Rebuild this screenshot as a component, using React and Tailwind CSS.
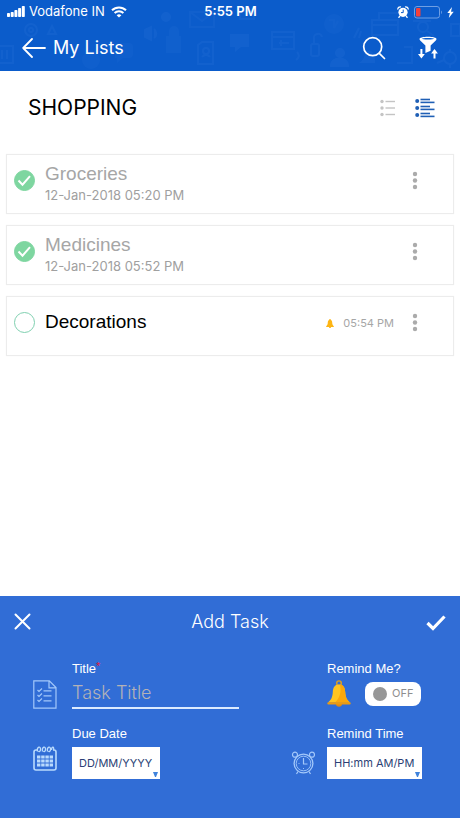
import React, { useState } from 'react';

const initialTasks = [
  { id: 1, name: 'Groceries', date: '12-Jan-2018 05:20 PM', done: true },
  { id: 2, name: 'Medicines', date: '12-Jan-2018 05:52 PM', done: true },
  { id: 3, name: 'Decorations', reminder: '05:54 PM', done: false },
];

function SignalIcon() {
  return (
    <svg width="18" height="12" viewBox="0 0 18 12" fill="white" aria-hidden="true">
      <rect x="0" y="7" width="3" height="4" rx="0.8" />
      <rect x="3.7" y="6" width="3" height="5" rx="0.8" />
      <rect x="7.4" y="4" width="3" height="7" rx="0.8" />
      <rect x="11.1" y="2" width="3" height="9" rx="0.8" />
      <rect x="14.8" y="0" width="3" height="11" rx="0.8" />
    </svg>
  );
}

function WifiIcon() {
  return (
    <svg width="16" height="12" viewBox="0 0 16 12" fill="none" stroke="white" strokeWidth="2" aria-hidden="true">
      <path d="M1 4.3a10 10 0 0 1 14 0" />
      <path d="M3.6 7a6.3 6.3 0 0 1 8.8 0" />
      <path d="M5.6 9.2a3.6 3.6 0 0 1 4.8 0L8 11.6z" fill="white" stroke="none" />
    </svg>
  );
}

function StatusAlarmIcon() {
  return (
    <svg width="12" height="12" viewBox="0 0 12 12" aria-hidden="true">
      <circle cx="6" cy="6.3" r="4.6" fill="white" />
      <path d="M.8 3A2.4 2.4 0 0 1 3.5.9M11.2 3A2.4 2.4 0 0 0 8.5.9M2.7 10.2L1.9 11.4M9.3 10.2l.8 1.2" stroke="white" strokeWidth="1.3" fill="none" strokeLinecap="round" />
      <path d="M6.2 3.6v3H4" stroke="#0b5ccb" strokeWidth="1" fill="none" />
    </svg>
  );
}

function BatteryIcon() {
  return (
    <svg width="28" height="13" viewBox="0 0 28 13" aria-hidden="true">
      <rect x="0.5" y="0.5" width="25" height="11.5" rx="2.5" fill="none" stroke="#6f9fe4" />
      <rect x="2" y="2" width="4.5" height="8.5" rx="1" fill="#f5403b" />
      <path d="M27 4.5c1.2.6 1.2 3 0 3.5z" fill="#6f9fe4" />
    </svg>
  );
}

function BoltIcon() {
  return (
    <svg width="7" height="11" viewBox="0 0 7 11" fill="white" aria-hidden="true">
      <path d="M5 0L.3 6h2.5L1.8 11 6.7 4.7H4z" />
    </svg>
  );
}

function BackIcon() {
  return (
    <svg width="24" height="20" viewBox="0 0 24 20" fill="none" stroke="white" strokeWidth="1.8" strokeLinecap="round" strokeLinejoin="round" aria-hidden="true">
      <path d="M10 1L1.2 10l8.8 9M1.2 10H23" />
    </svg>
  );
}

function SearchIcon() {
  return (
    <svg width="24" height="24" viewBox="0 0 24 24" fill="none" stroke="white" strokeWidth="1.7" strokeLinecap="round" aria-hidden="true">
      <circle cx="10.7" cy="10.7" r="9" />
      <path d="M17.3 17.3L22.5 22.5" />
    </svg>
  );
}

function FilterSortIcon() {
  return (
    <svg width="20" height="24" viewBox="0 0 20 24" aria-hidden="true">
      <path fill="white" fillRule="evenodd" d="M10 .8c5 0 8.5.9 8.5 2.3 0 .5-.3 1-.7 1.4L12.6 9.5v5.3L7.4 17V9.5L2.2 4.500c-.4-.4-.7-.9-.7-1.400C1.5 1.700 5 .8 10 .8zM10 2C6.5 2 4 2.400 4 2.800s2.500.8 6 .8 6-.4 6-.8-2.500-.8-6-.8z" />
      <path fill="white" d="M2.400 13h2v5h2.400l-3.400 4.500L0 18h2.400zM15.500 22.500h2v-5h2.400L16.500 13l-3.400 4.500h2.400z" />
    </svg>
  );
}

// faint doodles behind the header
function HeaderPattern() {
  return (
    <svg className="absolute inset-0 h-full w-full" viewBox="0 0 460 71" preserveAspectRatio="xMidYMid slice" fill="none" stroke="#4a8ae6" strokeWidth="2" opacity="0.12" aria-hidden="true">
      <path d="M-4 46h17v17H-4M2 50v9M7 50v9" />
      <circle cx="31" cy="30" r="6" />
      <circle cx="31" cy="30" r="2" />
      <path d="M52 26l4 8h-8zM46 8l8 6M80 12h7v7h-7z" />
      <circle cx="91" cy="60" r="9" fill="#4a8ae6" stroke="none" opacity="0.6" />
      <path d="M115 43h14a4 4 0 0 1 4 4v7a4 4 0 0 1-4 4h-6l-6 5v-5h-2z" fill="#4a8ae6" stroke="none" opacity="0.6" />
      <path d="M145 30l6-3v13l-6-3zM154 29c3 2 3 7 0 9" fill="#4a8ae6" />
      <circle cx="166" cy="17" r="4" fill="#4a8ae6" />
      <path d="M167 37h13v15h-13zM170 37v-6a4 4 0 0 1 8 0v6" fill="#4a8ae6" opacity="0.7" />
      <path d="M190 12h24v15h-24zM190 12l12 9 12-9" opacity="0.8" />
      <path d="M198 45l4-3h11v22h-15zM202 57a5 5 0 0 1 8 0" />
      <circle cx="206" cy="51" r="3" />
      <path d="M230 34h19v13h-8l-6 5v-5h-5z" fill="#4a8ae6" stroke="none" />
      <path d="M272 32h22v17h-22zM272 37h22M279 43h10M281 40v6" />
      <path d="M240 11h14v8h-14zM297 52c3 3 2 6-1 8" />
      <circle cx="334" cy="24" r="10" fill="#4a8ae6" stroke="none" opacity="0.6" />
      <path d="M329 20h5v8M338 21l-4 7" />
      <rect x="311" y="44" width="8" height="12" rx="2" />
      <path d="M314 44v-5a4 4 0 0 1 8-2M354 38l5-10M361 31l-2 7" />
      <circle cx="340" cy="53" r="4" fill="#4a8ae6" />
      <path d="M331 66c0-10 17-10 17 0zM362 62c4-3 3-8 6-10s6 2 6 10z" fill="#4a8ae6" />
      <path d="M372 20h26v15h-26zM372 25h26M398 13h-19v7M404 47h8v16h-15" />
      <circle cx="423" cy="27" r="5" />
      <path d="M427 31l7 5M413 21h18M451 24h9v12h-9z" />
      <circle cx="450" cy="58" r="6" />
      <path d="M437 63l7-3M450 49v3M450 64v4" />
    </svg>
  );
}

function CompactListIcon() {
  return (
    <svg width="16" height="18" viewBox="0 0 16 18" fill="#c4c4c4" aria-hidden="true">
      {[2.5, 9, 15.5].map((y) => (
        <g key={y}>
          <circle cx="2" cy={y} r="1.7" />
          <rect x="5.5" y={y - 0.7} width="9.5" height="1.4" />
        </g>
      ))}
    </svg>
  );
}

function DetailListIcon() {
  return (
    <svg width="20" height="20" viewBox="0 0 20 20" fill="#1f5fb5" aria-hidden="true">
      {[3, 10, 17].map((y) => (
        <g key={y}>
          <circle cx="2.2" cy={y} r="2" />
          <rect x="5.5" y={y - 2.3} width="9.5" height="1.6" />
          <rect x="5.5" y={y + 0.6} width="14" height="1.6" />
        </g>
      ))}
    </svg>
  );
}

function SmallBellIcon() {
  return (
    <svg width="8" height="9" viewBox="0 0 8 9" fill="#fdb515" aria-hidden="true">
      <path d="M4 0c.6 0 .9.4.9.9C6.2 1.5 6.2 3 6.3 4.5c.1 1 .5 1.7 1.5 2.700v.8H.2v-.8c1-1 1.400-1.700 1.500-2.700C1.800 3 1.800 1.500 3.100.9c0-.5.3-.9.9-.9z" />
      <path d="M3 8h2c0 .7-.4 1-1 1s-1-.3-1-1z" />
    </svg>
  );
}

function BellIcon() {
  return (
    <svg width="24" height="27" viewBox="0 0 24 27" aria-hidden="true">
      <circle cx="12" cy="3.2" r="2.3" fill="none" stroke="#e2a01c" strokeWidth="1.4" />
      <path d="M9 24h6c0 1.700-1.200 2.800-3 2.800S9 25.700 9 24z" fill="#e08a10" />
      <path d="M12 4.500c-4.500 0-6 3.500-6.200 7.500C5.500 17.500 4 20 1 22.500h22c-3-2.500-4.500-5-4.800-10.500-.2-4-1.700-7.500-6.200-7.500z" fill="#ffc421" />
      <path d="M13 4.600c3.700.4 5 3.700 5.200 7.400.3 5.500 1.800 8 4.800 10.500H8C13 18 14.500 12 13 4.600z" fill="#fba70c" />
      <rect x="0.3" y="22.2" width="23.4" height="2.3" rx="1.1" fill="#eb9a12" />
    </svg>
  );
}

function TaskSheetIcon() {
  return (
    <svg width="24" height="29" viewBox="0 0 24 29" fill="none" stroke="#a3c8fa" strokeWidth="1.2" aria-hidden="true">
      <path d="M.8.8h15.500L23 7.500v20.700H.8zM16 .8v7h7" />
      <path d="M4.500 10l1.500 1.500L9 8.500M4.500 15l1.500 1.500L9 13.500M4.500 20l1.500 1.500L9 18.500" />
      <path d="M10.500 10.800h8M10.500 15.800h8M10.500 20.800h8" />
    </svg>
  );
}

function CalendarIcon() {
  return (
    <svg width="24" height="25" viewBox="0 0 24 25" fill="none" stroke="#b9dafd" strokeWidth="1.6" aria-hidden="true">
      <path d="M4 4H3a2 2 0 0 0-2 2v16a2 2 0 0 0 2 2h18a2 2 0 0 0 2-2V6a2 2 0 0 0-2-2h-1" />
      {[4.5, 9.5, 14.5].map((x) => (
        <path key={x} d={`M${x} 5.500c-1-5 3.500-6 3-1.500-.2 1.500-1.500 2-2 1`} strokeWidth="1.3" />
      ))}
      <path d="M18.500 4c0-4 3-3.500 2 0" strokeWidth="1.3" />
      <g fill="#b9dafd" stroke="none">
        {[9.5, 13.5, 17.5].map((y) =>
          [4, 8.2, 12.4, 16.6].map((x) => <rect key={`${x}-${y}`} x={x} y={y} width="3.4" height="3" />)
        )}
      </g>
    </svg>
  );
}

function AlarmIcon() {
  return (
    <svg width="24" height="24" viewBox="0 0 24 24" fill="none" stroke="#a3c8fa" aria-hidden="true">
      <circle cx="12.5" cy="12.5" r="9.4" strokeWidth="1.3" />
      <circle cx="12.5" cy="12.5" r="7.3" strokeWidth="0.9" />
      <circle cx="4" cy="3.7" r="2.5" strokeWidth="1.2" />
      <circle cx="21" cy="3.7" r="2.5" strokeWidth="1.2" />
      <path d="M12.5 7v6h4M7 20.500L5.500 23M18 20.500L19.500 23" strokeWidth="1.2" />
      <path d="M7.500 12.500h1M12.500 17v1" strokeWidth="0.9" />
    </svg>
  );
}

function TaskRow({ task, onToggle }) {
  return (
    <li className="flex h-[60px] items-start border border-[#ececec] pl-[7px] pr-8 shadow-[0_0_1px_#f0f0f0]">
      <label className="relative mt-[15px] flex shrink-0 cursor-pointer">
        <input
          type="checkbox"
          aria-label={task.name}
          checked={task.done}
          onChange={() => onToggle(task.id)}
          className="h-[21px] w-[21px] appearance-none rounded-full border border-[#7fd0b0] checked:border-[#7ed6a0] checked:bg-[#7ed6a0]"
        />
        {task.done && (
          <svg className="pointer-events-none absolute inset-0" width="21" height="21" viewBox="0 0 21 21" fill="none" stroke="white" strokeWidth="2" aria-hidden="true">
            <path d="M4.500 10.500l4 4.200 7.500-8.500" />
          </svg>
        )}
      </label>
      <div className={`ml-[10px] flex-1 ${task.done ? 'pt-[8px]' : 'pt-[14px]'}`}>
        <div className={`text-[19px] leading-[22px] ${task.done ? 'text-[#a6a6a6]' : 'text-black'}`}>{task.name}</div>
        {task.date && (
          <div className="font-['Inter',sans-serif] text-[13px] leading-[20px] text-[#a0a0a0]">{task.date}</div>
        )}
      </div>
      {task.reminder && (
        <div className="mt-[17px] flex items-center gap-[9px] pr-[15px] font-['Inter',sans-serif] text-[11px] leading-[18px] text-[#a6a6a6]">
          <SmallBellIcon />
          <span>{task.reminder}</span>
        </div>
      )}
      <button aria-label={`Options for ${task.name}`} className="mt-[16px] flex w-[12px] justify-center">
        <svg width="6" height="19" viewBox="0 0 6 19" fill="#ababab" aria-hidden="true">
          <circle cx="3" cy="3" r="2.2" />
          <circle cx="3" cy="9.5" r="2.2" />
          <circle cx="3" cy="16" r="2.2" />
        </svg>
      </button>
    </li>
  );
}

function PickerField({ id, value }) {
  return (
    <div className="relative w-max">
      <select id={id} className="block h-8 appearance-none bg-white px-[7px] font-['Inter',sans-serif] text-[11px] text-[#2b3f75]">
        <option>{value}</option>
      </select>
      <svg className="pointer-events-none absolute bottom-[2px] right-[2px]" width="5" height="5" viewBox="0 0 5 5" fill="#3f83dc" aria-hidden="true">
        <path d="M0 0h5L3 5H2z" />
      </svg>
    </div>
  );
}

export default function App() {
  const [tasks, setTasks] = useState(initialTasks);
  const [title, setTitle] = useState('');
  const [remind, setRemind] = useState(false);

  const toggleTask = (id) => {
    setTasks((list) => list.map((t) => (t.id === id ? { ...t, done: !t.done } : t)));
  };

  return (
    <div className="flex min-h-screen flex-col bg-white font-['Liberation_Sans',sans-serif]">
      <header className="relative bg-[#0b5ccb] font-['Inter',sans-serif] text-white">
        <HeaderPattern />
        <div className="relative grid h-6 grid-cols-[1fr_auto_1fr] items-center pl-[7px] pr-[6px] text-[13px]">
          <div className="flex items-center gap-1">
            <SignalIcon />
            <span>Vodafone IN</span>
            <span className="ml-[2px]"><WifiIcon /></span>
          </div>
          <div className="font-semibold">5:55 PM</div>
          <div className="flex items-center justify-end gap-[5px]">
            <StatusAlarmIcon />
            <BatteryIcon />
            <BoltIcon />
          </div>
        </div>
        <div className="relative flex h-[47px] items-center pl-[22px] pr-[22px]">
          <button aria-label="Back"><BackIcon /></button>
          <h1 className="ml-[7px] flex-1 text-[18px]">My Lists</h1>
          <button aria-label="Search"><SearchIcon /></button>
          <button aria-label="Filter and sort" className="ml-8"><FilterSortIcon /></button>
        </div>
      </header>

      <main className="flex-1 px-[6px]">
        <div className="flex h-[83px] items-center pb-[10px] pl-[22px] pr-[19px]">
          <h2 className="flex-1 font-['Inter',sans-serif] text-[21px] text-black">SHOPPING</h2>
          <button aria-label="Compact view"><CompactListIcon /></button>
          <button aria-label="Detailed view" className="ml-[19px]"><DetailListIcon /></button>
        </div>
        <ul className="flex flex-col gap-[11px]">
          {tasks.map((task) => (
            <TaskRow key={task.id} task={task} onToggle={toggleTask} />
          ))}
        </ul>
      </main>

      <form className="bg-[#316dd6] pb-[39px] text-white" onSubmit={(e) => e.preventDefault()}>
        <div className="flex h-[50px] items-center justify-between px-[14px]">
          <button type="button" aria-label="Close" className="flex w-5">
            <svg width="17" height="17" viewBox="0 0 17 17" stroke="white" strokeWidth="2" strokeLinecap="round" aria-hidden="true">
              <path d="M1.500 1.500l14 14M15.500 1.500l-14 14" />
            </svg>
          </button>
          <h2 className="font-['Inter',sans-serif] text-[18px] font-light">Add Task</h2>
          <button type="submit" aria-label="Save" className="flex w-5 pt-1">
            <svg width="20" height="16" viewBox="0 0 20 16" fill="none" stroke="white" strokeWidth="3.2" aria-hidden="true">
              <path d="M1.500 8l5.500 5.500L18.500 1.500" />
            </svg>
          </button>
        </div>

        <div className="grid grid-cols-[27px_1fr_24px_94px] items-end gap-x-3 gap-y-4 pl-[33px] pr-[39px] pt-[14px] text-[13px]">
          <TaskSheetIcon />
          <div className="mr-10">
            <label htmlFor="title" className="flex leading-[18px]">
              Title<span className="text-[11px] leading-[12px] text-[#e3173e]">*</span>
            </label>
            <input
              id="title"
              value={title}
              onChange={(e) => setTitle(e.target.value)}
              placeholder="Task Title"
              className="block h-[31px] w-full border-b-2 border-[#dcebff] bg-transparent font-['Inter',sans-serif] text-[18px] font-light outline-none placeholder:text-[#b4b2b6]"
            />
          </div>
          <div />
          <div>
            <label htmlFor="remind" className="block leading-[18px]">Remind Me?</label>
            <div className="flex h-[31px] items-center justify-between">
              <BellIcon />
              <label className="flex h-6 w-14 cursor-pointer items-center rounded-lg bg-white pl-2 font-['Inter',sans-serif] text-[11px] text-[#8e8e8e]">
                <input
                  id="remind"
                  type="checkbox"
                  checked={remind}
                  onChange={(e) => setRemind(e.target.checked)}
                  className="mr-[5px] h-[14px] w-[14px] appearance-none rounded-full bg-[#979797] checked:bg-[#7ed6a0]"
                />
                {remind ? 'ON' : 'OFF'}
              </label>
            </div>
          </div>

          <div className="pb-2"><CalendarIcon /></div>
          <div>
            <label htmlFor="due" className="mb-1 block leading-[18px]">Due Date</label>
            <PickerField id="due" value="DD/MM/YYYY" />
          </div>
          <div className="pb-1"><AlarmIcon /></div>
          <div>
            <label htmlFor="time" className="mb-1 block leading-[18px]">Remind Time</label>
            <PickerField id="time" value="HH:mm AM/PM" />
          </div>
        </div>
      </form>
    </div>
  );
}
